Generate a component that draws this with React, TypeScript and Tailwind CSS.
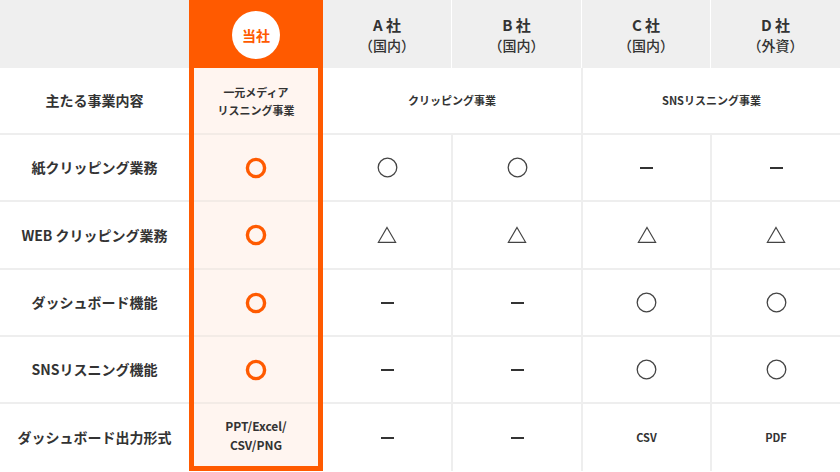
import React from 'react';

type Mark = 'o' | 'tri' | 'dash' | 'our';

const cols = 'grid grid-cols-[189px_134px_128px_130px_129px_130px]';

const OurMark: React.FC = () => (
  <svg width="22" height="22" viewBox="0 0 22 22">
    <circle cx="11" cy="11" r="8.6" fill="none" stroke="#ff5a00" strokeWidth="3.4" />
  </svg>
);

const Symbol: React.FC<{ mark: Mark }> = ({ mark }) => {
  if (mark === 'our') return <OurMark />;
  if (mark === 'o')
    return (
      <svg width="21" height="21" viewBox="0 0 21 21">
        <circle cx="10.5" cy="10.5" r="9.3" fill="none" stroke="#444" strokeWidth="1.3" />
      </svg>
    );
  if (mark === 'tri')
    return (
      <svg width="20" height="18" viewBox="0 0 20 18">
        <polygon points="10,1.5 18.6,16.3 1.4,16.3" fill="none" stroke="#444" strokeWidth="1.2" strokeLinejoin="miter" />
      </svg>
    );
  return <span className="block w-[13px] h-[2px] bg-[#333]" />;
};

const rows: { label: string; h: string; cells: Mark[] }[] = [
  { label: '紙クリッピング業務', h: 'h-[67px]', cells: ['o', 'o', 'dash', 'dash'] },
  { label: 'WEB クリッピング業務', h: 'h-[68px]', cells: ['tri', 'tri', 'tri', 'tri'] },
  { label: 'ダッシュボード機能', h: 'h-[67px]', cells: ['dash', 'dash', 'o', 'o'] },
  { label: 'SNSリスニング機能', h: 'h-[67px]', cells: ['dash', 'dash', 'o', 'o'] },
];

const companies = [
  { name: 'A 社', kind: '（国内）' },
  { name: 'B 社', kind: '（国内）' },
  { name: 'C 社', kind: '（国内）' },
  { name: 'D 社', kind: '（外資）' },
];

const LabelCell: React.FC<{ children: React.ReactNode; last?: boolean }> = ({ children, last }) => (
  <div
    className={`flex items-center justify-center text-[14px] font-bold text-[#333] ${
      last ? '' : 'border-b-2 border-[#eeeeee]'
    }`}
  >
    {children}
  </div>
);

const OurCell: React.FC<{ children: React.ReactNode; last?: boolean }> = ({ children, last }) => (
  <div className={`border-x-[5px] border-[#ff5a00] ${last ? 'border-b-[5px]' : ''}`}>
    <div
      className={`h-full flex items-center justify-center bg-[#fff5f0] text-center text-[11px] leading-[18px] font-bold text-[#333] ${
        last ? '' : 'border-b-2 border-[#f3ebe6]'
      }`}
    >
      {children}
    </div>
  </div>
);

const Cell: React.FC<{ children: React.ReactNode; divider?: boolean; span?: boolean; last?: boolean }> = ({
  children,
  divider,
  span,
  last,
}) => (
  <div
    className={`flex items-center justify-center border-[#eeeeee] text-[11px] font-bold text-[#333] ${
      last ? '' : 'border-b-2'
    } ${divider ? 'border-l-2' : ''} ${span ? 'col-span-2' : ''}`}
  >
    {children}
  </div>
);

const App: React.FC = () => {
  return (
    <div
      className="w-[840px] h-[472px] overflow-hidden bg-white"
      style={{ fontFamily: '"Noto Sans CJK JP", "Noto Sans", sans-serif' }}
    >
      {/* header */}
      <div className={`${cols} h-[68px] bg-[#efefef]`}>
        <div />
        <div className="flex items-center justify-center bg-[#ff5a00]">
          <div className="w-12 h-12 mt-[2px] rounded-full bg-white flex items-center justify-center text-[14px] font-bold text-[#ff5a00]">
            当社
          </div>
        </div>
        {companies.map((c, i) => (
          <div
            key={c.name}
            className={`flex flex-col items-center justify-center pt-[2px] text-[#333] ${i > 0 ? 'border-l border-white' : ''}`}
          >
            <span className="text-[15px] leading-[20px] font-bold">{c.name}</span>
            <span className="text-[14px] leading-[20px] font-medium">{c.kind}</span>
          </div>
        ))}
      </div>

      {/* 主たる事業内容 */}
      <div className={`${cols} h-[67px]`}>
        <LabelCell>主たる事業内容</LabelCell>
        <OurCell>
          一元メディア
          <br />
          リスニング事業
        </OurCell>
        <Cell span>クリッピング事業</Cell>
        <Cell span divider>
          SNSリスニング事業
        </Cell>
      </div>

      {rows.map((r) => (
        <div key={r.label} className={`${cols} ${r.h}`}>
          <LabelCell>{r.label}</LabelCell>
          <OurCell>
            <OurMark />
          </OurCell>
          {r.cells.map((m, i) => (
            <Cell key={i} divider={i > 0}>
              <Symbol mark={m} />
            </Cell>
          ))}
        </div>
      ))}

      {/* 出力形式 */}
      <div className={`${cols} h-[67px]`}>
        <LabelCell last>ダッシュボード出力形式</LabelCell>
        <OurCell last>
          <span className="text-[12px] leading-[19px]">
            PPT/Excel/
            <br />
            CSV/PNG
          </span>
        </OurCell>
        <Cell last>
          <Symbol mark="dash" />
        </Cell>
        <Cell last divider>
          <Symbol mark="dash" />
        </Cell>
        <Cell last divider>
          CSV
        </Cell>
        <Cell last divider>
          PDF
        </Cell>
      </div>
    </div>
  );
};

export default App;
